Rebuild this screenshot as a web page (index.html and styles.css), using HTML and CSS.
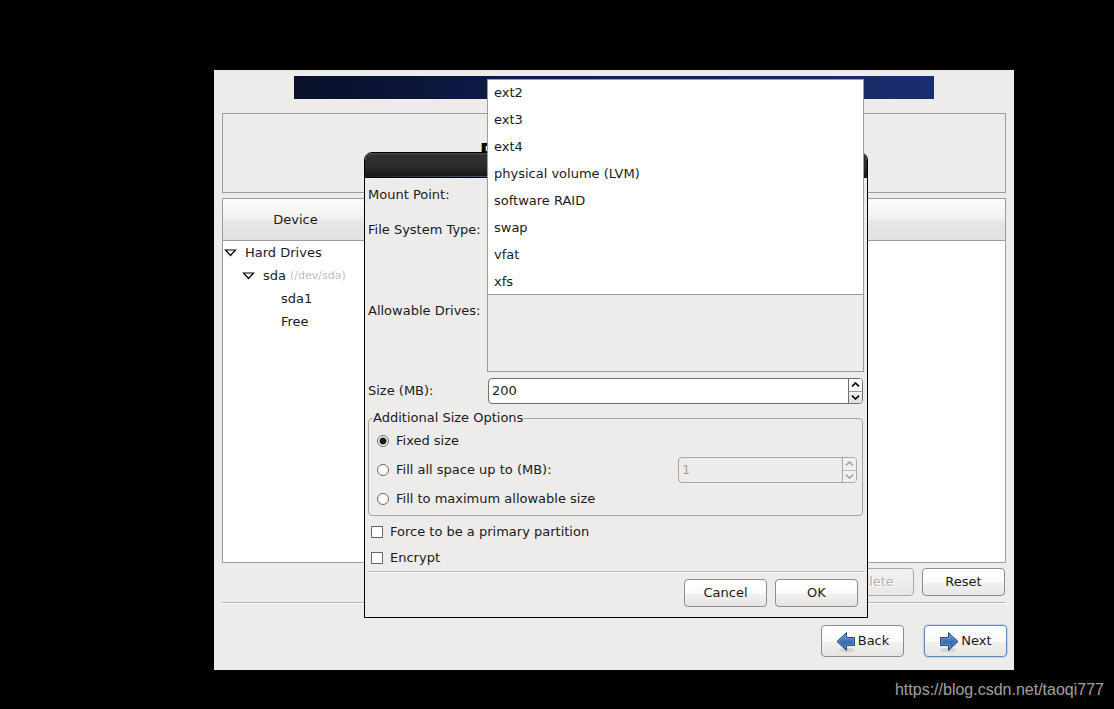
FILE: index.html
```html
<!DOCTYPE html>
<html lang="en">
<head>
<meta charset="utf-8">
<title>Add Partition</title>
<link rel="stylesheet" href="styles.css">
</head>
<body>
<main class="installer">
  <div class="banner"></div>
  <section class="canvas"><h1 class="canvas-title">Please Select A Device</h1></section>
  <section class="devices">
    <table class="tree">
      <thead><tr><th class="col-device">Device</th><th></th></tr></thead>
      <tbody>
        <tr><td><div class="node"><button class="twisty" aria-label="Collapse Hard Drives"><svg width="13" height="8" viewBox="0 0 13 8"><path d="M1.5 1H11.5L6.5 6.5Z"/></svg></button>Hard Drives</div></td><td></td></tr>
        <tr><td><div class="node level-1"><button class="twisty" aria-label="Collapse sda"><svg width="13" height="8" viewBox="0 0 13 8"><path d="M1.5 1H11.5L6.5 6.5Z"/></svg></button>sda <span class="path">(/dev/sda)</span></div></td><td></td></tr>
        <tr><td><div class="node level-2">sda1</div></td><td></td></tr>
        <tr><td><div class="node level-2">Free</div></td><td></td></tr>
      </tbody>
    </table>
  </section>
  <div class="actions">
    <button class="btn" disabled>Delete</button>
    <button class="btn">Reset</button>
  </div>
  <nav class="steps">
    <button class="btn btn-step"><svg class="arrow" width="20" height="22" viewBox="0 0 20 22"><defs><linearGradient id="blue" x1="0" y1="0" x2="0" y2="1"><stop offset="0" stop-color="#6f9bd0"/><stop offset=".5" stop-color="#3f72b3"/><stop offset="1" stop-color="#3465a4"/></linearGradient></defs><ellipse class="shade" cx="11" cy="19" rx="8" ry="2.2"/><path class="shape" d="M1 10.5L10.5 1.5V6.5H18.5V14.5H10.5V19.5Z"/><path class="shine" d="M2.8 10.4L9.5 4V7.5H17.5V13.5H9.5V17Z"/></svg>Back</button>
    <button class="btn btn-step btn-default"><svg class="arrow" width="20" height="22" viewBox="0 0 20 22"><ellipse class="shade" cx="9" cy="19" rx="8" ry="2.2"/><path class="shape" d="M19 10.5L9.5 1.5V6.5H1.5V14.5H9.5V19.5Z"/><path class="shine" d="M17.2 10.4L10.5 4V7.5H2.5V13.5H10.5V17Z"/></svg>Next</button>
  </nav>

  <form class="dialog" role="dialog" aria-label="Add Partition">
    <div class="titlebar"></div>
    <div class="dialog-body">
      <div class="fields">
        <label for="mount">Mount Point:</label>
        <input class="entry" id="mount" type="text">
        <label for="fstype">File System Type:</label>
        <div class="combo">
          <select class="popup" id="fstype" size="8">
            <option>ext2</option><option>ext3</option><option>ext4</option><option>physical volume (LVM)</option><option>software RAID</option><option>swap</option><option>vfat</option><option>xfs</option>
          </select>
        </div>
        <span class="label" id="drives-label">Allowable Drives:</span>
        <div class="drives" role="listbox" aria-labelledby="drives-label"></div>
        <label for="size">Size (MB):</label>
        <div class="spin">
          <input class="spin-value" id="size" type="text" value="200">
          <div class="spin-buttons">
            <button type="button" aria-label="Increase size"><svg width="9" height="5" viewBox="0 0 9 5"><path d="M1 4.3L4.5 1L8 4.3"/></svg></button>
            <button type="button" aria-label="Decrease size"><svg width="9" height="5" viewBox="0 0 9 5"><path d="M1 .7L4.5 4L8 .7"/></svg></button>
          </div>
        </div>
      </div>
      <fieldset class="group">
        <legend>Additional Size Options</legend>
        <div class="choice"><input class="radio" type="radio" name="grow" id="fixed" checked><label for="fixed">Fixed size</label></div>
        <div class="choice"><input class="radio" type="radio" name="grow" id="upto"><label for="upto">Fill all space up to (MB):</label>
          <div class="spin spin-limit spin-disabled">
            <input class="spin-value" type="text" value="1" aria-label="Maximum size (MB)" disabled>
            <div class="spin-buttons">
              <button type="button" aria-label="Increase maximum" disabled><svg width="9" height="5" viewBox="0 0 9 5"><path d="M1 4.3L4.5 1L8 4.3"/></svg></button>
              <button type="button" aria-label="Decrease maximum" disabled><svg width="9" height="5" viewBox="0 0 9 5"><path d="M1 .7L4.5 4L8 .7"/></svg></button>
            </div>
          </div>
        </div>
        <div class="choice"><input class="radio" type="radio" name="grow" id="max"><label for="max">Fill to maximum allowable size</label></div>
      </fieldset>
      <div class="checks">
        <div class="choice"><input class="check" type="checkbox" id="primary"><label for="primary">Force to be a primary partition</label></div>
        <div class="choice"><input class="check" type="checkbox" id="encrypt"><label for="encrypt">Encrypt</label></div>
      </div>
      <div class="dialog-actions">
        <button class="btn" type="button">Cancel</button>
        <button class="btn" type="button">OK</button>
      </div>
    </div>
  </form>
</main>
<footer class="watermark">https://blog.csdn.net/taoqi777</footer>
</body>
</html>
```
FILE: styles.css
```css
* { box-sizing: border-box; }

body {
  margin: 0;
  min-height: 100vh;
  padding: 70px 100px 0 214px;
  display: flex;
  flex-direction: column;
  background: #000;
  color: #1a1a1a;
  font: 13px/20px "DejaVu Sans", sans-serif;
}

button, input, select { font: inherit; color: inherit; margin: 0; }

.installer {
  position: relative;
  display: flex;
  flex-direction: column;
  min-height: 600px;
  padding: 6px 7px 13px;
  background: #edeceb;
}

.banner {
  height: 23px;
  margin: 0 73px;
  background: linear-gradient(90deg, #081029, #0e1b49 35%, #182b69 90%, #1a2e6e);
}

.canvas {
  height: 80px;
  margin: 14px 1px 0;
  padding-bottom: 2px;
  display: flex;
  align-items: center;
  justify-content: center;
  border: 1px solid #9d9c9b;
}

.canvas-title { margin: 0; font-size: 21px; line-height: 24px; color: #000; white-space: nowrap; }

.devices {
  flex: 1;
  margin: 5px 1px 0;
  border: 1px solid #9d9c9b;
  background: #fff;
}

.tree { width: 100%; border-collapse: separate; border-spacing: 0; table-layout: fixed; }
.tree th {
  height: 42px;
  padding: 0;
  font-weight: normal;
  border-bottom: 1px solid #9d9c9b;
  background: linear-gradient(#fcfcfb, #f1f0ef 50%, #e8e7e6 51%, #e2e1df);
}
.col-device { width: 145px; }
.tree td { height: 23px; padding: 0; white-space: nowrap; }
.node { display: flex; align-items: center; gap: 8px; padding-left: 1px; }
.level-1 { padding-left: 19px; }
.level-2 { padding-left: 58px; }
.path { margin-left: -4px; font-size: 11px; color: #bdbdbd; }
.twisty { display: flex; padding: 0; border: 0; background: none; }
.twisty path { fill: #fff; stroke: #000; stroke-width: 1.2; }

.btn {
  min-width: 83px;
  height: 28px;
  padding: 0 8px 1px;
  display: flex;
  align-items: center;
  justify-content: center;
  border: 1px solid #8e8b88;
  border-radius: 4px;
  background: linear-gradient(#fff, #fbfbfb 50%, #f1f1f0 55%, #e6e5e3);
  color: #1a1a1a;
}
.btn:disabled {
  border-color: #aaa8a6;
  background: linear-gradient(#f3f2f1, #e8e7e5);
  color: #b5b3b0;
  text-shadow: 1px 1px #fff;
}

.actions {
  margin: 0 1px;
  padding: 5px 1px 6px;
  display: flex;
  justify-content: flex-end;
  gap: 8px;
  border-bottom: 1px solid #b8b6b3;
  box-shadow: 0 1px #fff;
}

.steps { display: flex; justify-content: flex-end; gap: 20px; padding-top: 22px; }
.btn-step { height: 32px; gap: 2px; }
.btn-default { border-color: #5f87bd; box-shadow: 0 0 1px 1px #c3d2e6; }
.arrow { margin-top: 2px; }
.arrow .shape { fill: url(#blue); stroke: #204a87; }
.arrow .shine { fill: none; stroke: #7ea5d4; stroke-opacity: .5; }
.arrow .shade { fill: #000; fill-opacity: .1; }

.dialog {
  position: absolute;
  top: 82px;
  left: 150px;
  right: 146px;
  border: 1px solid #000;
  border-radius: 8px 8px 0 0;
  background: #edeceb;
}

.titlebar {
  height: 25px;
  border-bottom: 1px solid #000;
  border-radius: 7px 7px 0 0;
  background: linear-gradient(90deg, #1b1b1b, #4a6a99 30%, #4a6a99 70%, #1b1b1b) bottom / 100% 1px no-repeat,
    linear-gradient(#4a4a4a, #303030 12%, #2e2e2e 50%, #151515);
}

.dialog-body { padding: 2px 3px 10px; }

.fields {
  display: grid;
  grid-template-columns: 119px 1fr;
  grid-template-rows: 29px 29px 122px 26px;
  row-gap: 6px;
  align-items: center;
}
.fields label, .label { white-space: nowrap; }
.entry { width: 100%; height: 27px; border: 1px solid #8e8b88; border-radius: 3px; }
.combo { position: relative; align-self: stretch; }
.popup {
  position: absolute;
  z-index: 2;
  left: 0;
  bottom: -51px;
  width: 100%;
  height: 216px;
  padding: 0;
  overflow: hidden;
  border: 1px solid #9d9c9b;
  border-radius: 0;
  outline: 0;
  background: #fff;
}
.popup option { height: 27px; padding: 5px 6px 0; }
.drives { align-self: stretch; border: 1px solid #9d9c9b; }

.spin {
  height: 26px;
  margin: 0 1px;
  display: flex;
  border: 1px solid #716e6b;
  border-radius: 4px;
  background: #fff;
  overflow: hidden;
}
.spin-value { flex: 1; min-width: 0; padding: 0 3px; border: 0; background: none; }
.spin-buttons { width: 14px; display: flex; flex-direction: column; border-left: 1px solid #716e6b; }
.spin-buttons button {
  flex: 1;
  display: flex;
  align-items: center;
  justify-content: center;
  padding: 0;
  border: 0;
  background: #fafafa;
}
.spin-buttons button + button { border-top: 1px solid #9d9c9b; background: linear-gradient(#f1f0ef, #e2e1df); }
.spin-buttons path { fill: none; stroke: #000; stroke-width: 1.6; }
.spin-limit { width: 179px; margin: 0 0 0 auto; }
.spin-disabled { border-color: #aaa8a6; background: none; color: #a5a3a0; }
.spin-disabled .spin-buttons { border-color: #aaa8a6; }
.spin-disabled .spin-buttons button,
.spin-disabled .spin-buttons button + button { border-color: #c4c2c0; background: #f1f0ef; }
.spin-disabled path { stroke: #a5a3a0; }

.group {
  margin: 4px 1px 0 0;
  padding: 0 5px 3px 4px;
  display: flex;
  flex-direction: column;
  gap: 3px;
  border: 1px solid #a8a6a4;
  border-radius: 4px;
}
.group legend { padding: 0; line-height: 20px; }

.choice { height: 26px; display: flex; align-items: center; gap: 7px; }
.group .choice { padding-left: 4px; }
.checks { margin-top: 3px; padding-left: 3px; }

.radio, .check { appearance: none; width: 12px; height: 12px; border: 1px solid #6b6866; background: #fff; }
.radio { border-radius: 50%; }
.radio:checked { background: radial-gradient(circle, #1a1a1a 3px, #fff 4px); }

.dialog-actions {
  display: flex;
  justify-content: flex-end;
  gap: 8px;
  padding: 7px 6px 0 0;
  border-top: 1px solid #b8b6b3;
  box-shadow: inset 0 1px #fff;
}

.watermark {
  margin: 9px -90px 0 0;
  text-align: right;
  font: 16px/22px "Liberation Sans", Arial, sans-serif;
  color: #a0a0a0;
}
```
